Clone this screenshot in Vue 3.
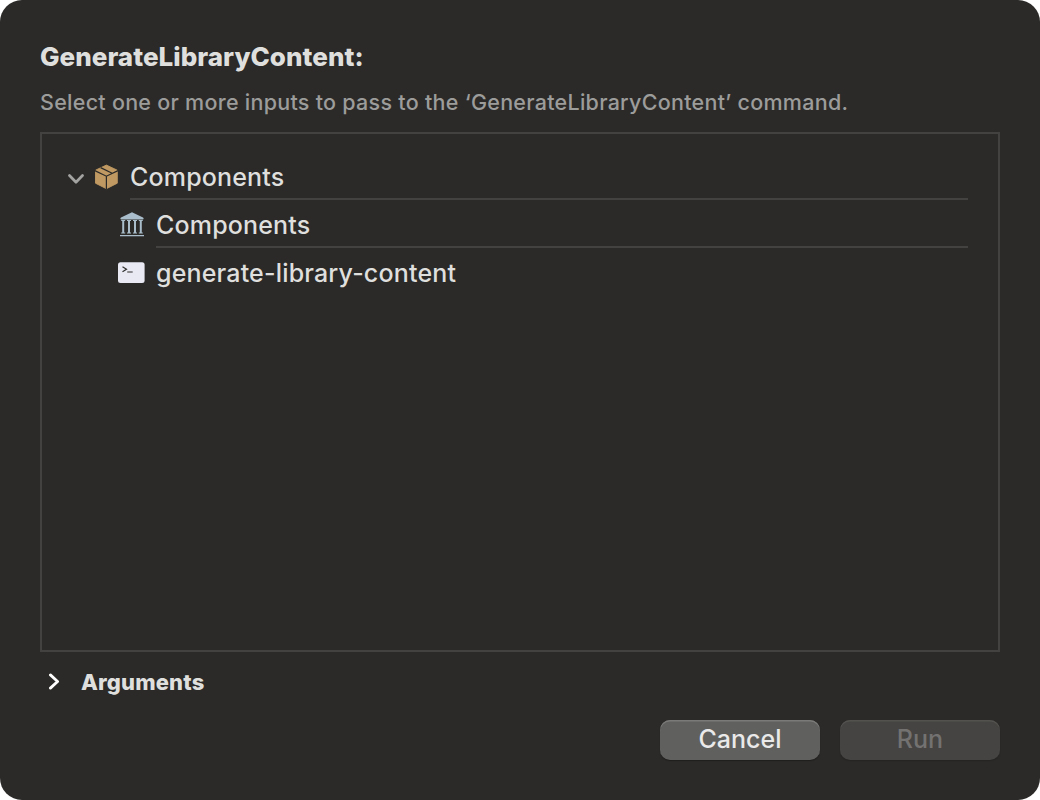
<script setup>
const rows = [
  { label: 'Components', icon: 'package', level: 0 },
  { label: 'Components', icon: 'library', level: 1 },
  { label: 'generate-library-content', icon: 'terminal', level: 1 },
]
</script>

<template>
  <main class="dialog">
    <h1 class="title"><span>GenerateLibraryContent:</span></h1>
    <p class="subtitle"><span>Select one or more inputs to pass to the ‘GenerateLibraryContent’ command.</span></p>

    <section class="tree">
      <div v-for="(row, i) in rows" :key="i" class="row" :class="{ child: row.level === 1 }">
        <svg v-if="row.level === 0" class="disclosure" width="16" height="10" viewBox="0 0 16 10">
          <path d="M1.5 1.5L8 8.2L14.5 1.5" fill="none" stroke="#a3a3a2" stroke-width="2.7" stroke-linecap="round" stroke-linejoin="round" />
        </svg>
        <svg v-if="row.icon === 'package'" class="icon" width="28" height="28" viewBox="0 0 28 28">
          <path d="M14.4 2.1L25.3 7.2V20.2L14.4 25.7L3.5 20.2V7.2Z" fill="#bf9862" stroke="#bf9862" stroke-width="0.9" stroke-linejoin="round" />
          <path d="M2.8 7.6L14.4 13.2L26 7.6M14.4 13.2V26.4M8.6 4.6L20.2 10.3" fill="none" stroke="#2b2a28" stroke-width="1.2" />
        </svg>
        <svg v-else-if="row.icon === 'library'" class="icon" width="28" height="28" viewBox="0 0 28 28">
          <g fill="#a9bdca">
            <path d="M14 1.2L25 6.5Q26 7 25.5 8Q25.2 8.5 24.4 8.5H3.6Q2.8 8.5 2.5 8Q2 7 3 6.5Z" />
            <path d="M3.2 9H7.2V10H6.2V21.5H7.2V22.5H3.2V21.5H4.2V10H3.2ZM9 9H13V10H12V21.5H13V22.5H9V21.5H10V10H9ZM15 9H19V10H18V21.5H19V22.5H15V21.5H16V10H15ZM20.8 9H24.8V10H23.8V21.5H24.8V22.5H20.8V21.5H21.8V10H20.8Z" />
            <path d="M2 24H26V25.2H2Z" />
          </g>
        </svg>
        <svg v-else class="icon" width="28" height="28" viewBox="0 0 28 28">
          <rect x="0" y="3.2" width="26.6" height="20.8" rx="2.5" fill="#e9e9f3" />
          <path d="M4.5 7.8L8.5 10.2L4.5 12.7M9.2 13H14.7" fill="none" stroke="#30302f" stroke-width="1.2" />
        </svg>
        <div class="label"><span>{{ row.label }}</span></div>
      </div>
    </section>

    <div class="arguments">
      <svg width="12" height="18" viewBox="0 0 12 18">
        <path d="M2.4 1.9L9.6 8.5L2.4 15.1" fill="none" stroke="#fff" stroke-width="2.8" stroke-linecap="round" stroke-linejoin="round" />
      </svg>
      <span>Arguments</span>
    </div>

    <footer class="actions">
      <button class="button cancel"><span>Cancel</span></button>
      <button class="button run" disabled><span>Run</span></button>
    </footer>
  </main>
</template>

<style>
body { background: #fff; }
</style>

<style scoped>
.dialog {
  box-sizing: border-box;
  width: 1040px;
  height: 800px;
  padding: 40px;
  border-radius: 22px;
  background: #2b2a28;
  color: #dfdfde;
  font-family: Inter, "Liberation Sans", sans-serif;
  overflow: hidden;
}
.title {
  margin: 0;
  height: 34px;
  line-height: 34px;
  font-size: 26px;
  font-weight: 780;
  letter-spacing: 0.03px;
  white-space: nowrap;
}
.subtitle {
  margin: 13px 0 0;
  height: 30px;
  line-height: 30px;
  font-size: 21.5px;
  font-weight: 450;
  letter-spacing: 0.27px;
  color: #9c9c9b;
  white-space: nowrap;
}
.tree {
  box-sizing: border-box;
  height: 520px;
  margin-top: 15px;
  padding: 18px 30px 0 24px;
  border: 2px solid #434240;
}
.row {
  display: flex;
  align-items: center;
  height: 48px;
}
.row.child { padding-left: 52px; }
.disclosure { flex: none; margin: 5px 9px 0 2px; }
.icon { flex: none; margin: 2px 10px 0 -1px; }
.row.child .icon { margin-left: 0; }
.label {
  flex: 1;
  box-sizing: border-box;
  height: 48px;
  line-height: 50px;
  border-bottom: 2px solid #434240;
  font-size: 25px;
  font-weight: 450;
  letter-spacing: 0.17px;
  white-space: nowrap;
}
.row:last-child .label { border-bottom-color: transparent; }
.arguments {
  display: flex;
  align-items: center;
  height: 30px;
  margin-top: 15px;
  padding-left: 8px;
  font-size: 22px;
  font-weight: 780;
  letter-spacing: 0.15px;
}
.arguments span { margin-left: 21px; }
.actions {
  display: flex;
  justify-content: flex-end;
  gap: 20px;
  margin-top: 23px;
}
.button {
  box-sizing: border-box;
  width: 160px;
  height: 40px;
  margin: 0;
  padding: 0 0 2px;
  border: 0;
  border-radius: 10px;
  font: 450 25px/38px Inter, "Liberation Sans", sans-serif;
}
.cancel {
  background: #60605e;
  color: #e9e9e9;
  box-shadow: inset 0 1.5px 0 #7a7a78, 0 1px 1px #1f1e1d;
}
.run {
  background: #454442;
  color: #737271;
  box-shadow: inset 0 1.5px 0 #53524f, 0 1px 1px #252422;
}
</style>
